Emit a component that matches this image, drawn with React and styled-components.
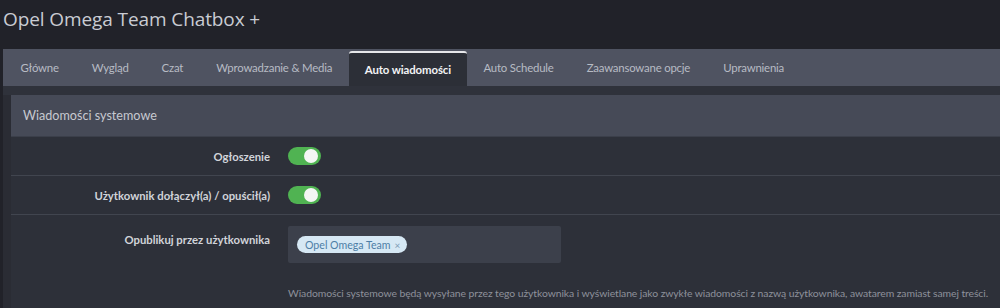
import React from "react";
import styled, { createGlobalStyle } from "styled-components";

const Global = createGlobalStyle`
  html, body { margin: 0; padding: 0; background: #212229; }
  body { font-family: Lato, "Noto Sans", sans-serif; overflow: hidden; }
`;

const Page = styled.div`
  width: 1000px;
  height: 308px;
  background: #212229;
  overflow: hidden;
`;

const Title = styled.h1`
  margin: 0;
  padding: 6px 0 0 3px;
  height: 49px;
  box-sizing: border-box;
  font-family: "Open Sans", sans-serif;
  font-size: 19px;
  font-weight: 400;
  color: #c9ccd3;
  letter-spacing: -0.1px;
`;

const Panel = styled.div`
  margin-left: 3px;
  background: #2a2c34;
`;

const TabBar = styled.div`
  display: flex;
  align-items: flex-end;
  height: 37px;
  padding-left: 1px;
  background: #4f5361;
  box-sizing: border-box;
`;

const Tab = styled.div`
  height: ${(p) => (p.$active ? "35px" : "37px")};
  display: flex;
  align-items: center;
  padding: 0 ${(p) => (p.$active ? "16px" : "16.5px")};
  font-size: 11.4px;
  letter-spacing: ${(p) => (p.$active ? "-0.1px" : "-0.2px")};
  font-weight: ${(p) => (p.$active ? 700 : 400)};
  color: ${(p) => (p.$active ? "#f2f3f5" : "#b7bbc4")};
  background: ${(p) => (p.$active ? "#2c2f37" : "transparent")};
  border-top: ${(p) => (p.$active ? "2px solid #e6e7ea" : "none")};
  border-radius: ${(p) => (p.$active ? "3px 3px 0 0" : "0")};
  box-sizing: border-box;
  white-space: nowrap;
`;

const Strip = styled.div`
  height: 9px;
  background: #2f323b;
`;

const Body = styled.div`
  padding-left: 8px;
  background: #2a2c34;
`;

const Section = styled.div`
  background: #2d3039;
`;

const SectionHeader = styled.div`
  height: 42px;
  display: flex;
  align-items: center;
  padding-left: 12px;
  background: #464a57;
  border-bottom: 1px solid #3b3f4a;
  box-sizing: border-box;
  font-size: 12.6px;
  color: #c6c9d0;
`;

const Row = styled.div`
  display: grid;
  grid-template-columns: 259px 1fr;
  column-gap: 18px;
  align-items: ${(p) => (p.$top ? "start" : "center")};
  min-height: ${(p) => p.$h || 39}px;
  padding-top: ${(p) => p.$pt || 0}px;
  border-bottom: ${(p) => (p.$last ? "none" : "1px solid #41454f")};
  box-sizing: border-box;
`;

const Label = styled.div`
  text-align: right;
  font-size: 11.3px;
  font-weight: 700;
  color: #d1d4da;
  padding-top: ${(p) => p.$pt || 0}px;
`;

const Toggle = styled.div`
  width: 33px;
  height: 18px;
  border-radius: 9px;
  background: #50b352;
  position: relative;
  &::after {
    content: "";
    position: absolute;
    right: 3px;
    top: 2px;
    width: 14px;
    height: 14px;
    border-radius: 50%;
    background: #f4f6f4;
  }
`;

const Control = styled.div`
  display: flex;
  flex-direction: column;
`;

const TagInput = styled.div`
  width: 273px;
  height: 37px;
  background: #3c404b;
  border-radius: 2px;
  display: flex;
  align-items: center;
  padding-left: 9px;
  box-sizing: border-box;
`;

const Tag = styled.span`
  display: inline-flex;
  align-items: center;
  height: 17px;
  padding: 0 7px 0 8px;
  border-radius: 9px;
  background: #d6e8f4;
  color: #4d7ea6;
  font-size: 10.6px;
  gap: 4px;
`;

const TagX = styled.span`
  font-size: 10px;
  color: #7d9bb5;
`;

const Help = styled.div`
  margin-top: 24px;
  font-size: 10.4px;
  letter-spacing: -0.08px;
  color: #8d919b;
  white-space: nowrap;
`;

const tabs = [
  "Główne",
  "Wygląd",
  "Czat",
  "Wprowadzanie & Media",
  "Auto wiadomości",
  "Auto Schedule",
  "Zaawansowane opcje",
  "Uprawnienia",
];

export default function App() {
  return (
    <Page>
      <Global />
      <Title>Opel Omega Team Chatbox +</Title>
      <Panel>
        <TabBar>
          {tabs.map((t) => (
            <Tab key={t} $active={t === "Auto wiadomości"}>
              {t}
            </Tab>
          ))}
        </TabBar>
        <Strip />
        <Body>
          <Section>
            <SectionHeader>Wiadomości systemowe</SectionHeader>
            <Row>
              <Label>Ogłoszenie</Label>
              <Toggle />
            </Row>
            <Row>
              <Label>Użytkownik dołączył(a) / opuścił(a)</Label>
              <Toggle />
            </Row>
            <Row $top $pt={11} $h={93} $last>
              <Label $pt={7}>Opublikuj przez użytkownika</Label>
              <Control>
                <TagInput>
                  <Tag>
                    Opel Omega Team <TagX>×</TagX>
                  </Tag>
                </TagInput>
                <Help>
                  Wiadomości systemowe będą wysyłane przez tego użytkownika i
                  wyświetlane jako zwykłe wiadomości z nazwą użytkownika,
                  awatarem zamiast samej treści.
                </Help>
              </Control>
            </Row>
          </Section>
        </Body>
      </Panel>
    </Page>
  );
}
